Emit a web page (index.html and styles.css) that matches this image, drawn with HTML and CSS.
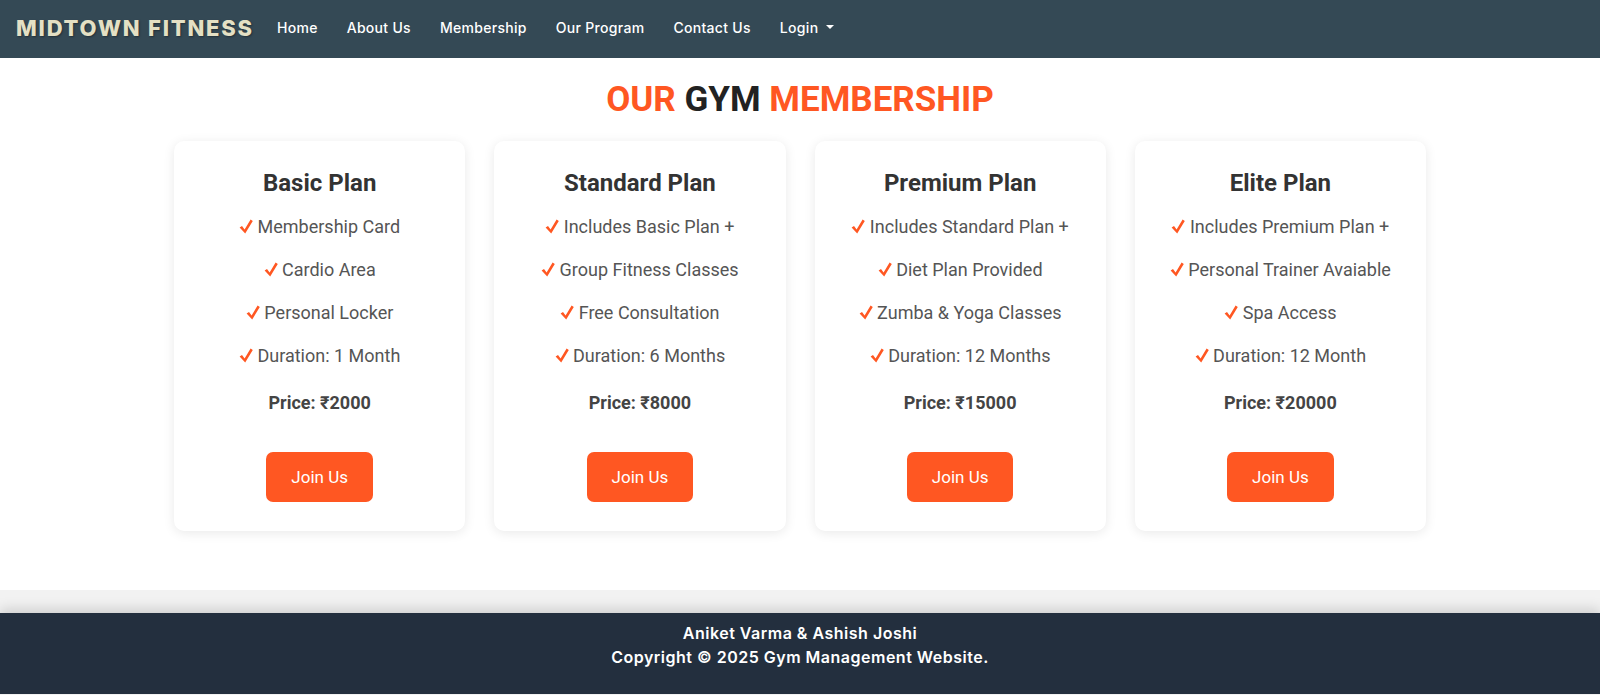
FILE: index.html
```html
<!DOCTYPE html>
<html lang="en">
<head>
<meta charset="utf-8">
<title>Midtown Fitness - Membership</title>
<link rel="stylesheet" href="styles.css">
</head>
<body>
<nav class="navbar">
  <a class="brand" href="#">MIDTOWN FITNESS</a>
  <ul class="nav-links">
    <li><a href="#">Home</a></li>
    <li><a href="#">About Us</a></li>
    <li><a href="#">Membership</a></li>
    <li><a href="#">Our Program</a></li>
    <li><a href="#">Contact Us</a></li>
    <li><a href="#" class="dropdown">Login<span class="caret"></span></a></li>
  </ul>
</nav>

<section class="membership">
  <h2 class="section-title"><span class="accent">OUR</span> GYM <span class="accent">MEMBERSHIP</span></h2>
  <div class="plans">
    <div class="plan">
      <h3>Basic Plan</h3>
      <p class="feature"><svg class="check" viewBox="0 0 14 15"><path d="M0.6 8.6 L3 7 L5.6 10.4 L11.6 0.6 L13.8 1.9 L6.2 14.6 Z"/></svg> Membership Card</p>
      <p class="feature"><svg class="check" viewBox="0 0 14 15"><path d="M0.6 8.6 L3 7 L5.6 10.4 L11.6 0.6 L13.8 1.9 L6.2 14.6 Z"/></svg> Cardio Area</p>
      <p class="feature"><svg class="check" viewBox="0 0 14 15"><path d="M0.6 8.6 L3 7 L5.6 10.4 L11.6 0.6 L13.8 1.9 L6.2 14.6 Z"/></svg> Personal Locker</p>
      <p class="feature"><svg class="check" viewBox="0 0 14 15"><path d="M0.6 8.6 L3 7 L5.6 10.4 L11.6 0.6 L13.8 1.9 L6.2 14.6 Z"/></svg> Duration: 1 Month</p>
      <p class="price">Price: ₹2000</p>
      <a class="btn" href="#">Join Us</a>
    </div>
    <div class="plan">
      <h3>Standard Plan</h3>
      <p class="feature"><svg class="check" viewBox="0 0 14 15"><path d="M0.6 8.6 L3 7 L5.6 10.4 L11.6 0.6 L13.8 1.9 L6.2 14.6 Z"/></svg> Includes Basic Plan +</p>
      <p class="feature"><svg class="check" viewBox="0 0 14 15"><path d="M0.6 8.6 L3 7 L5.6 10.4 L11.6 0.6 L13.8 1.9 L6.2 14.6 Z"/></svg> Group Fitness Classes</p>
      <p class="feature"><svg class="check" viewBox="0 0 14 15"><path d="M0.6 8.6 L3 7 L5.6 10.4 L11.6 0.6 L13.8 1.9 L6.2 14.6 Z"/></svg> Free Consultation</p>
      <p class="feature"><svg class="check" viewBox="0 0 14 15"><path d="M0.6 8.6 L3 7 L5.6 10.4 L11.6 0.6 L13.8 1.9 L6.2 14.6 Z"/></svg> Duration: 6 Months</p>
      <p class="price">Price: ₹8000</p>
      <a class="btn" href="#">Join Us</a>
    </div>
    <div class="plan">
      <h3>Premium Plan</h3>
      <p class="feature"><svg class="check" viewBox="0 0 14 15"><path d="M0.6 8.6 L3 7 L5.6 10.4 L11.6 0.6 L13.8 1.9 L6.2 14.6 Z"/></svg> Includes Standard Plan +</p>
      <p class="feature"><svg class="check" viewBox="0 0 14 15"><path d="M0.6 8.6 L3 7 L5.6 10.4 L11.6 0.6 L13.8 1.9 L6.2 14.6 Z"/></svg> Diet Plan Provided</p>
      <p class="feature"><svg class="check" viewBox="0 0 14 15"><path d="M0.6 8.6 L3 7 L5.6 10.4 L11.6 0.6 L13.8 1.9 L6.2 14.6 Z"/></svg> Zumba &amp; Yoga Classes</p>
      <p class="feature"><svg class="check" viewBox="0 0 14 15"><path d="M0.6 8.6 L3 7 L5.6 10.4 L11.6 0.6 L13.8 1.9 L6.2 14.6 Z"/></svg> Duration: 12 Months</p>
      <p class="price">Price: ₹15000</p>
      <a class="btn" href="#">Join Us</a>
    </div>
    <div class="plan">
      <h3>Elite Plan</h3>
      <p class="feature"><svg class="check" viewBox="0 0 14 15"><path d="M0.6 8.6 L3 7 L5.6 10.4 L11.6 0.6 L13.8 1.9 L6.2 14.6 Z"/></svg> Includes Premium Plan +</p>
      <p class="feature"><svg class="check" viewBox="0 0 14 15"><path d="M0.6 8.6 L3 7 L5.6 10.4 L11.6 0.6 L13.8 1.9 L6.2 14.6 Z"/></svg> Personal Trainer Avaiable</p>
      <p class="feature"><svg class="check" viewBox="0 0 14 15"><path d="M0.6 8.6 L3 7 L5.6 10.4 L11.6 0.6 L13.8 1.9 L6.2 14.6 Z"/></svg> Spa Access</p>
      <p class="feature"><svg class="check" viewBox="0 0 14 15"><path d="M0.6 8.6 L3 7 L5.6 10.4 L11.6 0.6 L13.8 1.9 L6.2 14.6 Z"/></svg> Duration: 12 Month</p>
      <p class="price">Price: ₹20000</p>
      <a class="btn" href="#">Join Us</a>
    </div>
  </div>
</section>

<footer class="footer">
  <p>Aniket Varma &amp; Ashish Joshi</p>
  <p>Copyright © 2025 Gym Management Website.</p>
</footer>
</body>
</html>
```

FILE: styles.css
```css
* { box-sizing: border-box; }

body {
  margin: 0;
  background: #f2f2f2;
  font-family: Roboto, "Liberation Sans", sans-serif;
}

.navbar {
  height: 58px;
  background: #344955;
  display: flex;
  align-items: center;
  padding: 0 16px 3px;
}

.brand {
  font-family: Inter, "Liberation Sans", sans-serif;
  font-weight: 800;
  font-size: 22px;
  letter-spacing: 1.8px;
  color: #e4e0c4;
  text-decoration: none;
  text-shadow: 1px 1px 2px rgba(0,0,0,0.35);
  margin-right: 23px;
}

.nav-links {
  list-style: none;
  margin: 0;
  padding: 0;
  display: flex;
  gap: 29px;
}

.nav-links a {
  font-family: Inter, "Liberation Sans", sans-serif;
  font-weight: 500;
  font-size: 14px;
  letter-spacing: 0.3px;
  color: #fff;
  text-decoration: none;
  display: flex;
  align-items: center;
}

.caret {
  display: inline-block;
  margin-left: 8px;
  border-top: 4px solid #fff;
  border-left: 4px solid transparent;
  border-right: 4px solid transparent;
  margin-top: -2px;
}

.membership {
  background: #fff;
  padding: 21px 0 59px;
  text-align: center;
}

.section-title {
  margin: 0 0 20px;
  font-size: 35px;
  line-height: 42px;
  font-weight: 700;
  color: #222;
}

.accent { color: #ff5722; }

.plans {
  width: 1252px;
  margin: 0 auto;
  display: grid;
  grid-template-columns: repeat(4, 1fr);
  gap: 29px;
}

.plan {
  background: #fff;
  border-radius: 10px;
  box-shadow: 0 2px 12px rgba(0,0,0,0.09);
  padding: 28px 12px 29px;
  display: flex;
  flex-direction: column;
  align-items: center;
}

.plan h3 {
  margin: 0 0 15px;
  font-size: 24px;
  line-height: 29px;
  font-weight: 700;
  color: #333;
}

.feature {
  margin: 0 0 16px;
  font-size: 18px;
  line-height: 27px;
  color: #555;
}

.check {
  width: 14px;
  height: 15px;
  fill: #ff5722;
  vertical-align: -1px;
}

.price {
  margin: 4px 0 36px;
  font-size: 18px;
  line-height: 27px;
  font-weight: 700;
  color: #444;
}

.btn {
  display: inline-block;
  background: #ff5722;
  color: #fff;
  text-decoration: none;
  font-size: 17px;
  line-height: 50px;
  height: 50px;
  padding: 0 25px;
  border-radius: 7px;
}

.footer {
  margin-top: 23px;
  background: #232f3e;
  box-shadow: 0 -4px 12px rgba(0,0,0,0.15);
  padding: 8px 0 25px;
  text-align: center;
  color: #fff;
  font-family: Inter, "Liberation Sans", sans-serif;
  font-weight: 600;
  font-size: 16px;
  letter-spacing: 0.5px;
  line-height: 24px;
}

.footer p { margin: 0; }
```
